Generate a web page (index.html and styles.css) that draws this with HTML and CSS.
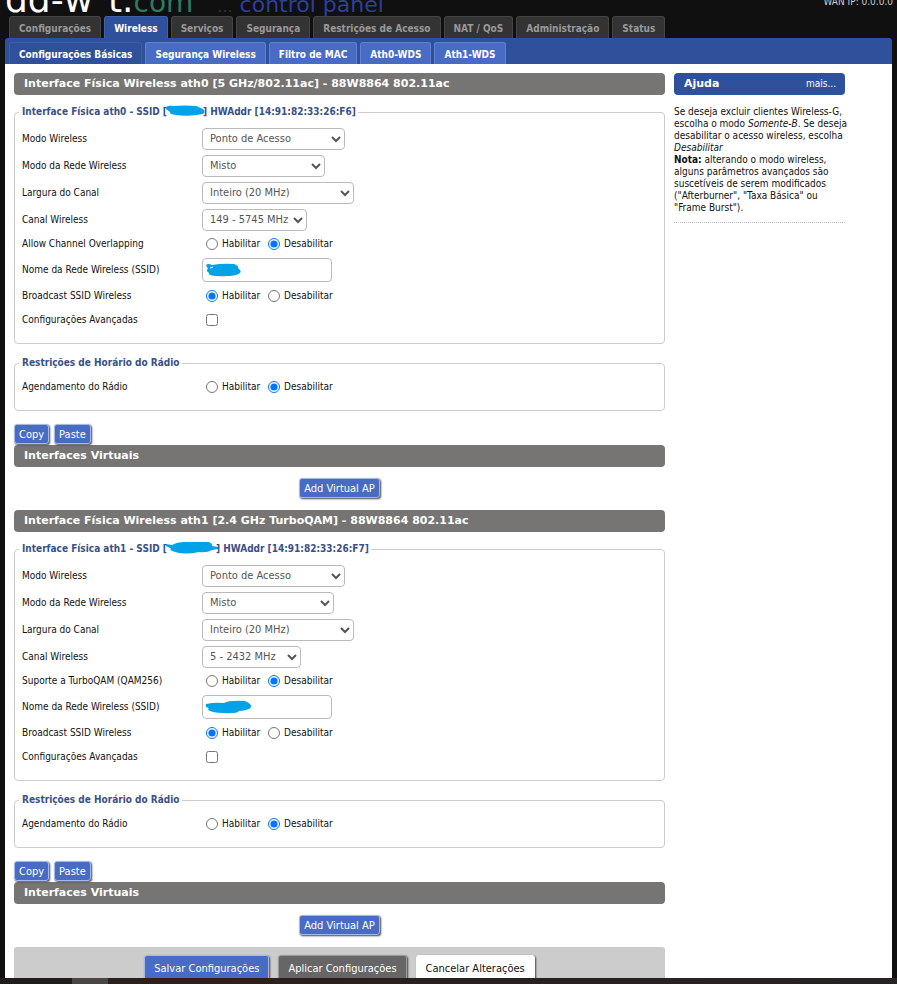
FILE: index.html
```html
<!DOCTYPE html>
<html lang="pt-BR">
<head>
<meta charset="utf-8">
<meta name="viewport" content="width=device-width, initial-scale=1">
<title>DD-WRT - Wireless</title>
<link rel="stylesheet" href="styles.css">
</head>
<body>
<div class="page">
  <header class="header">
    <div class="brand"><span class="brand-name">dd-w<span class="brand-r">r</span>t.<span class="brand-com">com</span></span><span class="brand-sub"><span class="brand-dots">...</span> control panel</span></div>
    <div class="wan">WAN IP: 0.0.0.0</div>
  </header>
  <nav class="tabs">
    <a href="#">Configurações</a>
    <a href="#" class="current">Wireless</a>
    <a href="#">Serviços</a>
    <a href="#">Segurança</a>
    <a href="#">Restrições de Acesso</a>
    <a href="#">NAT / QoS</a>
    <a href="#">Administração</a>
    <a href="#">Status</a>
  </nav>
  <nav class="subtabs">
    <a href="#" class="current">Configurações Básicas</a>
    <a href="#">Segurança Wireless</a>
    <a href="#">Filtro de MAC</a>
    <a href="#">Ath0-WDS</a>
    <a href="#">Ath1-WDS</a>
  </nav>
  <div class="body">
    <main class="main">
      <h2>Interface Física Wireless ath0 [5 GHz/802.11ac] - 88W8864 802.11ac</h2>
      <fieldset>
        <legend>Interface Física ath0 - SSID [<svg class="mark" width="40" height="12" viewBox="0 0 40 12"><path d="M1 2Q4 0 8 1Q20 0 31 1L38 4Q41 7 38 9Q24 12 11 10Q4 9 5 7L1 4Z"/></svg>] HWAddr [14:91:82:33:26:F6]</legend>
        <div class="row"><label for="mode0">Modo Wireless</label><select id="mode0" class="w-143"><option>Ponto de Acesso</option></select></div>
        <div class="row"><label for="net0">Modo da Rede Wireless</label><select id="net0" class="w-123"><option>Misto</option></select></div>
        <div class="row"><label for="width0">Largura do Canal</label><select id="width0" class="w-152"><option>Inteiro (20 MHz)</option></select></div>
        <div class="row"><label for="chan0">Canal Wireless</label><select id="chan0" class="w-105"><option>149 - 5745 MHz</option></select></div>
        <div class="row radios"><span class="name">Allow Channel Overlapping</span><label class="opt"><input type="radio" name="over0">Habilitar</label><label class="opt"><input type="radio" name="over0" checked>Desabilitar</label></div>
        <div class="row ssid"><label for="ssid0">Nome da Rede Wireless (SSID)</label><span class="field"><input id="ssid0" type="text"><svg class="cover" width="36" height="14" viewBox="0 0 36 14"><path d="M1 2Q3 0 7 2Q18 0 29 1Q34 3 33 5Q37 8 35 10Q30 14 12 13Q3 13 4 10Q0 7 3 6Z"/><path class="gap" d="M5 5L8 4"/></svg></span></div>
        <div class="row radios"><span class="name">Broadcast SSID Wireless</span><label class="opt"><input type="radio" name="bc0" checked>Habilitar</label><label class="opt"><input type="radio" name="bc0">Desabilitar</label></div>
        <div class="row check"><label for="adv0">Configurações Avançadas</label><input id="adv0" type="checkbox"></div>
      </fieldset>
      <fieldset class="short">
        <legend>Restrições de Horário do Rádio</legend>
        <div class="row radios"><span class="name">Agendamento do Rádio</span><label class="opt"><input type="radio" name="sch0">Habilitar</label><label class="opt"><input type="radio" name="sch0" checked>Desabilitar</label></div>
      </fieldset>
      <div class="copy"><button type="button">Copy</button><button type="button">Paste</button></div>
      <h2>Interfaces Virtuais</h2>
      <div class="add"><button type="button">Add Virtual AP</button></div>

      <h2>Interface Física Wireless ath1 [2.4 GHz TurboQAM] - 88W8864 802.11ac</h2>
      <fieldset>
        <legend>Interface Física ath1 - SSID [<svg class="mark" width="53" height="12" viewBox="0 0 53 12"><path d="M1 2L7 3Q12 0 20 0H44Q48 2 47 4L53 5V7L47 8Q42 11 34 10Q20 13 10 10L5 8Q7 7 5 6L1 4Z"/></svg>] HWAddr [14:91:82:33:26:F7]</legend>
        <div class="row"><label for="mode1">Modo Wireless</label><select id="mode1" class="w-143"><option>Ponto de Acesso</option></select></div>
        <div class="row"><label for="net1">Modo da Rede Wireless</label><select id="net1" class="w-132"><option>Misto</option></select></div>
        <div class="row"><label for="width1">Largura do Canal</label><select id="width1" class="w-152"><option>Inteiro (20 MHz)</option></select></div>
        <div class="row"><label for="chan1">Canal Wireless</label><select id="chan1" class="w-99"><option>5 - 2432 MHz</option></select></div>
        <div class="row radios"><span class="name">Suporte a TurboQAM (QAM256)</span><label class="opt"><input type="radio" name="qam1">Habilitar</label><label class="opt"><input type="radio" name="qam1" checked>Desabilitar</label></div>
        <div class="row ssid"><label for="ssid1">Nome da Rede Wireless (SSID)</label><span class="field"><input id="ssid1" type="text"><svg class="cover" width="47" height="14" viewBox="0 0 47 14"><path d="M1 4Q10 2 19 3Q24 0 40 1Q47 4 46 7Q45 10 34 11Q32 14 18 13Q8 13 3 10Q5 8 1 7Z"/></svg></span></div>
        <div class="row radios"><span class="name">Broadcast SSID Wireless</span><label class="opt"><input type="radio" name="bc1" checked>Habilitar</label><label class="opt"><input type="radio" name="bc1">Desabilitar</label></div>
        <div class="row check"><label for="adv1">Configurações Avançadas</label><input id="adv1" type="checkbox"></div>
      </fieldset>
      <fieldset class="short">
        <legend>Restrições de Horário do Rádio</legend>
        <div class="row radios"><span class="name">Agendamento do Rádio</span><label class="opt"><input type="radio" name="sch1">Habilitar</label><label class="opt"><input type="radio" name="sch1" checked>Desabilitar</label></div>
      </fieldset>
      <div class="copy"><button type="button">Copy</button><button type="button">Paste</button></div>
      <h2>Interfaces Virtuais</h2>
      <div class="add"><button type="button">Add Virtual AP</button></div>
      <div class="submit"><button type="button">Salvar Configurações</button><button type="button" class="apply">Aplicar Configurações</button><button type="button" class="cancel">Cancelar Alterações</button></div>
    </main>
    <aside class="help">
      <div class="help-title"><h2>Ajuda</h2><a href="#">mais...</a></div>
      <div class="help-text">
        <p>Se deseja excluir clientes Wireless-G, escolha o modo <i>Somente-B</i>. Se deseja desabilitar o acesso wireless, escolha <i>Desabilitar</i><br><b>Nota:</b> alterando o modo wireless, alguns parâmetros avançados são suscetíveis de serem modificados ("Afterburner", "Taxa Básica" ou "Frame Burst").</p>
      </div>
    </aside>
  </div>
</div>
<div class="strip"></div>
</body>
</html>
```
FILE: styles.css
```css
* { box-sizing: border-box; }

body {
  margin: 0;
  background: #101010;
  color: #111;
  font: 10px/12px "DejaVu Sans Condensed", "DejaVu Sans", sans-serif;
}

a { color: inherit; text-decoration: none; }

.page { padding: 0 5px; }

.header {
  display: flex;
  justify-content: space-between;
  align-items: flex-end;
  height: 16px;
  margin-right: -1px;
  overflow: hidden;
}

.brand {
  display: flex;
  align-items: baseline;
  gap: 24px;
  line-height: 18px;
  font-family: "DejaVu Sans", sans-serif;
  white-space: nowrap;
}
.brand-name { color: #fff; font-size: 36px; }
.brand-r { color: #101010; }
.brand-com { color: #2f7a62; font-size: 28px; }
.brand-sub { color: #2c3f9c; font-size: 22px; }
.brand-dots { color: #333; font-size: 16px; }
.wan { color: #ccc; line-height: 12px; padding-bottom: 8px; white-space: nowrap; }

.tabs, .subtabs {
  display: flex;
  gap: 3px;
  font-size: 10px;
  font-weight: bold;
  white-space: nowrap;
}
.tabs { padding-left: 4px; }
.tabs a {
  height: 22px;
  padding: 0 9px;
  line-height: 24px;
  border: 1px solid #444;
  border-bottom: 0;
  border-radius: 3px 3px 0 0;
  background: #333;
  color: #999;
}
.tabs .current { background: #2f519b; border-color: #3f61ab; color: #fff; }

.subtabs {
  height: 26px;
  padding: 4px 4px 0;
  border-radius: 3px 3px 0 0;
  background: #2f519b;
}
.subtabs a {
  padding: 0 9px;
  line-height: 24px;
  border: 1px solid #6181d0;
  border-bottom: 0;
  border-radius: 3px 3px 0 0;
  background: #486cc4;
  color: #fff;
}
.subtabs .current { background: #2f519b; border-color: #3c5ca8; }

.body {
  display: flex;
  gap: 9px;
  padding: 9px 47px 0 9px;
  background: #fff;
}
.main { flex: 1; min-width: 0; }

h2 {
  margin: 0;
  padding: 0 10px;
  border-radius: 4px;
  background: #767573;
  color: #fff;
  font: bold 11px/22px "DejaVu Sans", sans-serif;
}

fieldset {
  height: 239px;
  margin: 10px 0 0;
  padding: 6px 7px 0;
  border: 1px solid #ccc;
  border-radius: 4px;
}
.short { height: 55px; margin-top: 12px; }

legend {
  margin-left: -3px;
  padding: 0 2px 0 3px;
  height: 14px;
  color: #39508a;
  font-size: 10px;
  font-weight: bold;
  line-height: 14px;
}
.mark { margin: 0 -2px; vertical-align: -2px; fill: #00a2e8; }

.row { display: flex; align-items: center; height: 27px; }
.row > label:first-child, .name { width: 180px; }
.radios { height: 22px; }
.ssid { height: 30px; }
.check { height: 26px; }

select, input[type="text"] {
  border: 1px solid #bbb;
  border-radius: 4px;
  background: #fff;
  color: #555;
  font: 11px "DejaVu Sans Condensed", "DejaVu Sans", sans-serif;
}
select { height: 22px; padding: 0 0 0 3px; }
.w-143 { width: 143px; }
.w-123 { width: 123px; }
.w-132 { width: 132px; }
.w-152 { width: 152px; }
.w-105 { width: 105px; }
.w-99 { width: 99px; }

.field { position: relative; }
input[type="text"] { display: block; width: 130px; height: 24px; }
.cover { position: absolute; left: 3px; top: 5px; fill: #00a2e8; }
.gap { stroke: #fff; }

.opt { display: flex; align-items: center; width: 62px; white-space: nowrap; }
.opt + .opt { width: auto; }
input[type="radio"], input[type="checkbox"] { width: 12px; height: 12px; margin: 0 4px; }

button {
  height: 20px;
  padding: 0 4px;
  border: 1px solid #a5b8ea;
  border-radius: 3px;
  background: #486cc4;
  box-shadow: 1px 1px 2px #444;
  color: #fff;
  font: 11px "DejaVu Sans Condensed", "DejaVu Sans", sans-serif;
}
.copy { display: flex; gap: 5px; padding-top: 13px; height: 34px; }
.add { display: flex; justify-content: center; padding: 11px 0; height: 43px; }

.submit {
  display: flex;
  justify-content: center;
  gap: 9px;
  height: 31px;
  padding-top: 8px;
  overflow: hidden;
  border-radius: 3px 3px 0 0;
  background: #ccc;
}
.submit button { flex-shrink: 0; height: 26px; padding: 0 9px; }
.submit .apply { background: #666; border-color: #999; }
.submit .cancel { background: #fff; border-color: #fff; color: #111; }

.help { width: 171px; }
.help-title {
  display: flex;
  justify-content: space-between;
  align-items: center;
  padding-right: 9px;
  border-radius: 4px;
  background: #2f519b;
  color: #fff;
}
.help-title h2 { background: none; }
.help-text { margin-top: 11px; padding-bottom: 8px; border-bottom: 1px dotted #bbb; }
.help p { margin: 0 -4px 0 0; }

.strip {
  height: 6px;
  background: linear-gradient(90deg, #211c1c 72px, #4a4644 72px, #4a4644 108px, #2b201c 108px, #272223);
}
```
